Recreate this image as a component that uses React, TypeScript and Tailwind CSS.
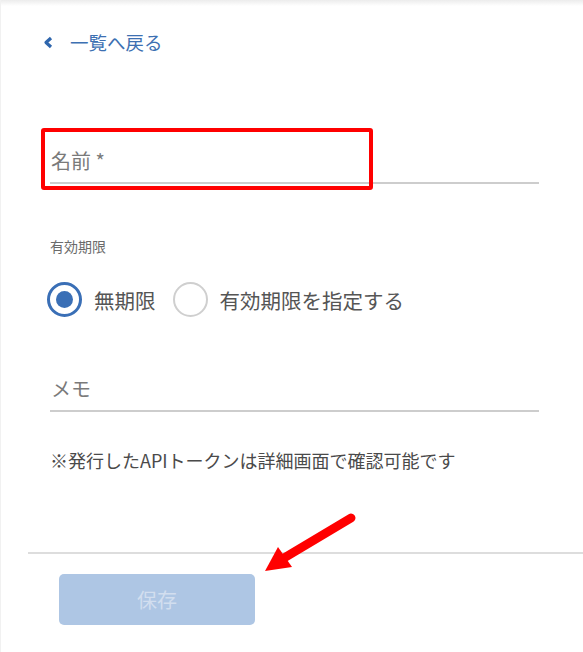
import { useState } from "react";

type Expiry = "none" | "custom";

function Radio({ checked, label, onClick }: { checked: boolean; label: string; onClick: () => void }) {
    return (
        <button type="button" onClick={onClick} className="flex items-center gap-[12px]">
            <span
                className={`flex h-[35px] w-[35px] items-center justify-center rounded-full ${checked ? "border-[3px] border-[#3a6fb6]" : "border-2 border-[#cfcfcf]"
                    }`}
            >
                {checked && <span className="h-[17px] w-[17px] rounded-full bg-[#3a6fb6]" />}
            </span>
            <span className="text-[20.5px] leading-[24px] text-[#555]">{label}</span>
        </button>
    );
}

export default function App() {
    const [expiry, setExpiry] = useState<Expiry>("none");

    return (
        <div
            className="relative h-[652px] w-[583px] overflow-hidden border-l border-[#f1f1f1] bg-white"
            style={{ fontFamily: '"Noto Sans CJK JP", "Noto Sans", sans-serif' }}
        >
            {/* top shade */}
            <div className="h-[6px] bg-gradient-to-b from-[#ececec] to-white" />

            <div className="pl-[41px] pr-[44px]">
                {/* Back link */}
                <a href="#" className="mt-[26px] flex items-center text-[#3d70b2]">
                    <svg width="11" height="13" viewBox="0 0 11 13" className="ml-[1px]">
                        <path d="M8 2 L3 6.5 L8 11" fill="none" stroke="#2f66ad" strokeWidth="3.2" strokeLinejoin="round" />
                    </svg>
                    <span className="ml-[16px] text-[18.5px] leading-[20px]">一覧へ戻る</span>
                </a>

                <div className="ml-[8px]">
                    {/* Name */}
                    <div className="mt-[97px] border-b-2 border-[#cdcdcd] pb-[9px] pl-[1px] text-[20px] leading-[24px] text-[#7a7a7a]">
                        名前 *
                    </div>

                    {/* Expiry */}
                    <div className="mt-[53px] text-[14px] leading-[18px] text-[#6b6b6b]">有効期限</div>
                    <div className="mt-[27px] -ml-[3px] flex items-center gap-[17px]">
                        <Radio checked={expiry === "none"} label="無期限" onClick={() => setExpiry("none")} />
                        <Radio checked={expiry === "custom"} label="有効期限を指定する" onClick={() => setExpiry("custom")} />
                    </div>

                    {/* Memo */}
                    <div className="mt-[60px] border-b-2 border-[#cdcdcd] pb-[9px] pl-[1px] text-[20px] leading-[24px] text-[#7a7a7a]">
                        メモ
                    </div>

                    <p className="mt-[36px] text-[18px] leading-[24px] text-[#4a4a4a]">
                        ※発行したAPIトークンは詳細画面で確認可能です
                    </p>
                </div>
            </div>

            {/* Footer */}
            <div className="ml-[27px] mt-[80px] h-[2px] bg-[#dddddd]" />
            <div className="pl-[58px] pt-[20px]">
                <button
                    type="button"
                    disabled
                    className="h-[51px] w-[196px] rounded-[5px] bg-[#aec6e4] text-[20px] text-[#d2deef]"
                >
                    保存
                </button>
            </div>

            {/* Annotation: red box */}
            <div className="absolute left-[40px] top-[128px] h-[62px] w-[332px] rounded-[3px] border-4 border-[#ff0000]" />

            {/* Annotation: arrow */}
            <svg className="absolute left-0 top-0" width="583" height="652">
                <line x1="350" y1="518" x2="283" y2="558" stroke="#ff0000" strokeWidth="9" strokeLinecap="round" />
                <polygon points="264,571 277,547 291,567" fill="#ff0000" />
            </svg>
        </div>
    );
}
